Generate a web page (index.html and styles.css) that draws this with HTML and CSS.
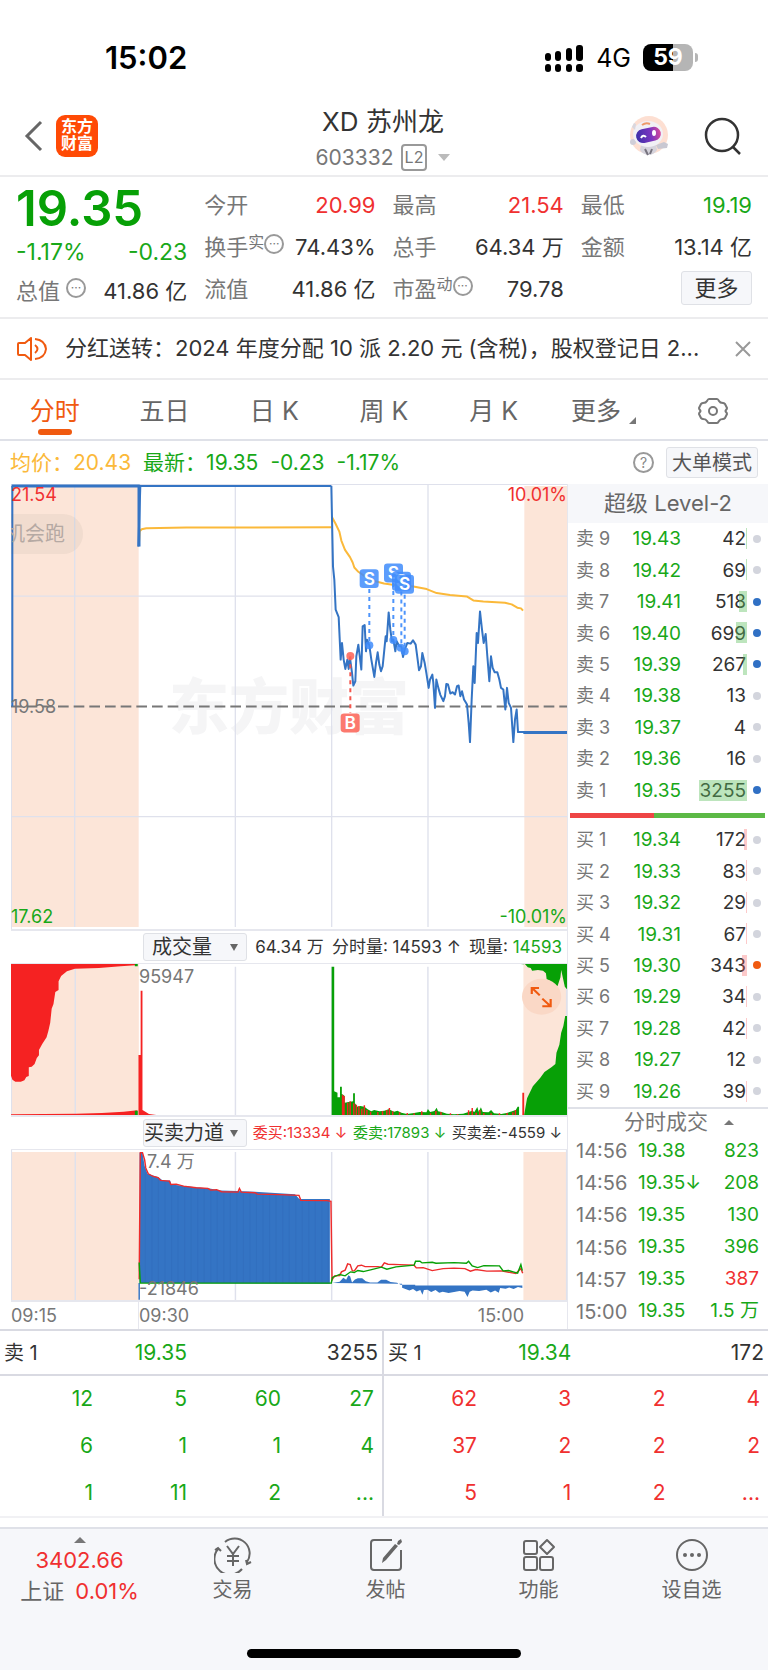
FILE: index.html
```html
<!DOCTYPE html>
<html lang="zh-CN">
<head>
  <meta charset="utf-8">
  <meta name="viewport" content="width=device-width, initial-scale=1">
  <title>XD苏州龙 603332</title>
  <link rel="stylesheet" href="styles.css">
</head>
<body>
<div class="status-bar">
  <span class="clock">15:02</span>
  <div class="status-icons">
    <svg class="signal" viewBox="0 0 40 28" width="40" height="28">
      <g fill="#000">
        <rect x="1" y="9" width="6" height="8" rx="3"/><rect x="11" y="7" width="6" height="10" rx="3"/>
        <rect x="22" y="4" width="6" height="13" rx="3"/><rect x="32" y="1" width="7" height="16" rx="3"/>
        <rect x="1" y="20" width="6" height="8" rx="3"/><rect x="11" y="20" width="6" height="8" rx="3"/>
        <rect x="22" y="20" width="6" height="8" rx="3"/><rect x="32" y="20" width="7" height="8" rx="3"/>
      </g>
    </svg>
    <span class="network">4G</span>
    <div class="battery"><span>59</span></div>
  </div>
</div>

<header class="header">
  <div class="header-side">
    <button class="icon-button" aria-label="返回">
      <svg viewBox="0 0 20 32" width="20" height="32"><path d="M17 2L3 16l14 14" fill="none" stroke="#666" stroke-width="3"/></svg>
    </button>
    <a href="#" class="logo">东方<br>财富</a>
  </div>
  <div class="header-title">
    <h1>XD 苏州龙</h1>
    <div class="stock-code">603332 <span class="level">L2</span><i class="caret-down"></i></div>
  </div>
  <div class="header-side right">
    <button class="icon-button" aria-label="智能助手">
      <svg viewBox="0 0 42 42" width="42" height="42">
        <defs>
          <linearGradient id="visor" x1="0" y1="0" x2="1" y2="0">
            <stop offset="0" stop-color="#3d2fa8"/><stop offset=".6" stop-color="#7a35c0"/><stop offset="1" stop-color="#d84a9b"/>
          </linearGradient>
        </defs>
        <circle cx="21" cy="20" r="19" fill="#fddfd2"/>
        <path d="M13 30q8-4 15 0l1 5q-3 5-9 5-6-1-8-5z" fill="#d5d3dc"/>
        <path d="M28 30l8-3 4 2-1 4-9 1z" fill="#c9c8d2"/>
        <circle cx="5" cy="27" r="3" fill="#d0ced8"/>
        <ellipse cx="20" cy="19" rx="15" ry="13" fill="#f1f0f5"/>
        <path d="M4 12l2-4 2 1-1 6z" fill="#d8d7df"/>
        <rect x="8" y="13" width="25" height="14" rx="7" fill="url(#visor)" transform="rotate(-12 20 20)"/>
        <path d="M13 23q2-4 5-1" fill="none" stroke="#fff" stroke-width="2"/>
        <ellipse cx="26" cy="18" rx="2" ry="3" fill="#fff"/>
        <path d="M14 10q4-3 8-1" fill="none" stroke="#ee9a6a" stroke-width="2"/>
        <path d="M17 34l3 6M24 34l-2 5" stroke="#77747f" stroke-width="2"/>
      </svg>
    </button>
    <button class="icon-button" aria-label="搜索">
      <svg viewBox="0 0 38 38" width="38" height="38"><g fill="none" stroke="#333" stroke-width="2.5"><circle cx="18" cy="18" r="16"/><path d="M29 30l7 7"/></g></svg>
    </button>
  </div>
</header>

<section class="quote">
  <div class="quote-price">
    <strong class="down">19.35</strong>
    <div class="pair change down"><span>-1.17%</span><span>-0.23</span></div>
    <div class="pair"><label>总值<i class="info">···</i></label><span>41.86 亿</span></div>
  </div>
  <div class="quote-col">
    <div class="pair"><label>今开</label><span class="up">20.99</span></div>
    <div class="pair"><label>换手<sup>实</sup><i class="info">···</i></label><span>74.43%</span></div>
    <div class="pair"><label>流值</label><span>41.86 亿</span></div>
  </div>
  <div class="quote-col">
    <div class="pair"><label>最高</label><span class="up">21.54</span></div>
    <div class="pair"><label>总手</label><span>64.34 万</span></div>
    <div class="pair"><label>市盈<sup>动</sup><i class="info">···</i></label><span>79.78</span></div>
  </div>
  <div class="quote-col">
    <div class="pair"><label>最低</label><span class="down">19.19</span></div>
    <div class="pair"><label>金额</label><span>13.14 亿</span></div>
    <button class="box-button more">更多</button>
  </div>
</section>

<section class="notice">
  <svg viewBox="0 0 30 26" width="30" height="26"><g fill="none" stroke="#f05a10" stroke-width="2" stroke-linejoin="round"><path d="M14 2v22l-6-5H2q-1 0-1-1V8q0-1 1-1h6zM18 9q5 4 0 8M18 3q10 1 11 10-1 9-11 10"/></g></svg>
  <a href="#">分红送转：2024 年度分配 10 派 2.20 元 (含税)，股权登记日 2...</a>
  <button class="icon-button" aria-label="关闭">
    <svg viewBox="0 0 16 16" width="16" height="16"><path d="M1 1l14 14M15 1L1 15" stroke="#999" stroke-width="2"/></svg>
  </button>
</section>

<nav class="tabs">
  <button class="active">分时</button>
  <button>五日</button>
  <button>日 K</button>
  <button>周 K</button>
  <button>月 K</button>
  <button class="more-tab">更多<i></i></button>
  <button aria-label="设置">
    <svg viewBox="0 0 30 28" width="30" height="28"><g fill="none" stroke="#777" stroke-width="2" stroke-linejoin="round"><path d="M11 2h8q1 0 2 2 1 2 4 2 1 0 2 1l2 4q0 1-1 2-1 1 0 2 1 1 1 2l-2 4q-1 1-2 1-3 0-4 2-1 2-2 2h-8q-1 0-2-2-1-2-4-2-1 0-2-1l-2-4q0-1 1-2 1-1 0-2-1-1-1-2l2-4q1-1 2-1 3 0 4-2 1-2 2-2z"/><circle cx="15" cy="14" r="4"/></g></svg>
  </button>
</nav>

<div class="summary">
  <span class="avg">均价：20.43</span>
  <span class="down">最新：19.35</span>
  <span class="down">-0.23</span>
  <span class="down">-1.17%</span>
  <button class="help" aria-label="帮助">?</button>
  <button class="box-button mode">大单模式</button>
</div>

<main class="market">
  <div class="charts">
    <div class="chart price-chart">
      <span class="watermark">东方财富</span>
      <svg viewBox="0 0 1668 1338" preserveAspectRatio="none">
        <path d="M0 6H383V1332H0zM1540 6h128v1326h-128z" fill="#fce5d8"/>
        <path class="grid" d="M1 0V1338M191 0V1332M673 0V1332M962 0V1332M1251 0V1332M0 337H1668M0 1000H1668M0 1H1668"/>
        <path d="M0 669H1668" class="base-line"/>
        <path class="avg-line" d="M384 176l2-34 6-6 14-3 120-2 435-1"/>
        <g transform="translate(927 -42)">
          <polyline class="avg-line" points="35,140 46,160 58,185 64,212 75,240 90,262 98,278 103,293 115,306 132,318 160,333 192,341 218,345 280,350 320,358 350,370 390,376 440,380 460,392 490,395 555,399 575,404 592,414 603,416 609,423"/>
          <polyline class="price-line" points="34,48 39,290 43,330 47,420 56,442 62,570 66,520 71,570 76,598 82,570 86,598 90,565 96,610 100,648 106,635 109,560 115,525 124,600 128,470 134,466 138,545 141,510 148,527 154,570 163,622 168,580 173,548 178,585 183,605 188,590 193,540 197,500 200,515 206,428 211,480 216,515 220,510 226,545 230,515 238,530 244,530 249,562 254,540 262,520 272,522 279,512 287,525 291,555 297,602 303,590 307,550 314,580 319,610 326,655 330,630 337,615 340,640 345,715 349,630 355,655 361,676 370,695 375,680 379,643 384,645 391,672 398,668 405,675 411,650 416,648 421,680 426,665 432,690 438,700 441,705 446,760 450,818 455,690 460,590 464,640 470,490 474,520 480,425 486,480 491,520 497,493 502,560 508,635 513,560 518,595 524,608 532,608 538,630 543,655 550,660 556,720 561,655 566,700 573,715 580,818 585,750 590,720 594,788 612,788"/>
          <path class="price-line thick" d="M610 789H742"/>
          <g class="sell">
            <path d="M148 358V520M220 340V505M244 365V530M254 375V540"/>
            <circle cx="148" cy="527" r="12"/><circle cx="220" cy="511" r="12"/><circle cx="242" cy="534" r="12"/><circle cx="254" cy="545" r="12"/>
            <rect x="119" y="298" width="57" height="57" rx="10"/><text x="148" y="345">S</text>
            <rect x="192" y="281" width="57" height="57" rx="10"/><text x="220" y="328">S</text>
            <rect x="216" y="306" width="57" height="57" rx="10"/><text x="244" y="353">S</text>
            <rect x="225" y="315" width="57" height="57" rx="10"/><text x="254" y="362">S</text>
          </g>
          <g class="buy">
            <path d="M91 560V730"/>
            <circle cx="91" cy="559" r="12"/>
            <rect x="62" y="732" width="57" height="57" rx="10"/><text x="91" y="779">B</text>
          </g>
        </g>
        <path class="price-line" d="M4 669V6M382 188L388 6H961"/>
        <path class="price-line thick" d="M2 6H384V188"/>
      </svg>
      <span class="label top-left up">21.54</span>
      <span class="label top-right up">10.01%</span>
      <span class="label middle">19.58</span>
      <span class="label bottom-left down">17.62</span>
      <span class="label bottom-right down">-10.01%</span>
      <span class="bubble">机会跑</span>
    </div>

    <div class="chart-head">
      <span class="picker"><select aria-label="指标一"><option>成交量</option></select></span>
      <span>64.34 万</span><span>分时量: 14593 ↑</span><span>现量: <b class="down">14593</b></span>
    </div>
    <div class="chart volume-chart">
      <svg viewBox="30 102 1531 453" preserveAspectRatio="none">
        <path d="M30 102H382V555H30zM1441 102H1561V555H1441z" fill="#fce5d8"/>
        <path class="grid" d="M31 102V555M207 102V555M648 110V555M913 110V555M1178 110V555M1560 102V555"/>
        <path fill="#f52222" d="M30 102H378l-6 4-40 3-60 5-66 2-22 8-16 14-7 16v26l-9 6-5 36-5 14-4 42-5 24-5 20-12 20-9 18v16l-6 8-6 18-8 8-8 2v26l-7 3-5 10-10 4H42l-8-6-4-12z"/>
        <path fill="#f52222" d="M30 555v-2l180-2 70-2 60-4 38-4v14zM381 555V375h6V182h5v358l8 5 10 7 20 3zM1438 488h5v67h-5z"/>
        <path fill="#07a006" d="M371 102h8v7h-8zM371 542h8v13h-8zM1441 102H1561v76l-6-8-6-30-4-20-2 22-8 26-10-2-8 2-4-16-8-4-2-18-8-8-14-2-16 2-4-8-8-2-8-10-12 2zM1443 555l8-50 16-36 20-25 12-18 20-15 10-9 3-34 8-24 5-36 6-20 5-30h5V555z"/>
        <polygon fill="#07a006" points="913,110 920,110 920,484 929,488 929,502 936,502 936,470 941,470 941,492 949,498 949,518 960,516 972,514 972,490 977,490 977,520 984,530 992,528 1003,530 1012,538 1022,544 1030,540 1045,544 1058,542 1070,538 1085,545 1094,542 1105,548 1120,552 1140,549 1155,546 1174,547 1178,537 1184,546 1196,543 1202,533 1206,544 1216,546 1230,551 1250,553 1275,551 1292,545 1300,542 1306,546 1314,531 1318,545 1324,532 1329,546 1345,547 1352,540 1360,550 1380,552 1395,549 1410,544 1420,540 1425,530 1429,530 1429,555 913,555"/>
        <path class="red-bars" d="M943 555V494M947 555V498M957 555V518M964 555V514M974 555V520M981 555V524M988 555V528M996 555V536M1003 555V526M1010 555V540M1020 555V545M1040 555V546M1053 555V543M1065 555V540M1072 555V534M1081 555V544M1100 555V547M1121 555V549M1140 555V550M1161 555V544M1185 555V550M1200 555V543M1214 555V546M1240 555V550M1260 555V552M1290 555V541M1300 555V534M1311 555V548M1321 555V540M1332 555V550M1352 555V550M1375 555V550M1396 555V549M1412 555V547M1419 555V540"/>
        <circle cx="1491" cy="200" r="54" fill="#fad8c6"/>
        <g fill="none" stroke="#f05a10" stroke-width="6"><path d="M1486 196l-21-22M1464 192v-18h20M1493 206l22 22M1516 207v22h-23"/></g>
      </svg>
      <span class="label pre-open">95947</span>
    </div>

    <div class="chart-head small">
      <span class="picker"><select aria-label="指标二"><option>买卖力道</option></select></span>
      <span class="up">委买:13334 ↓</span><span class="down">委卖:17893 ↓</span><span>买卖差:-4559 ↓</span>
    </div>
    <div class="chart power-chart">
      <svg viewBox="30 120 1531 453" preserveAspectRatio="none">
        <path d="M30 126H382V573H30zM1441 126H1561V573H1441z" fill="#fce5d8"/>
        <path class="grid" d="M31 120V573M207 126V573M648 126V573M913 126V573M1178 126V573M1560 120V573"/>
        <path fill="#3474c4" d="M384 522V128h8l6 40 8 24 30 10 12 10h20l4 12 60 8 45 4 30 6 45 2 50 2 110 8 12 14h84v256z"/>
        <path stroke="#3069b8" stroke-width="2" opacity=".5" d="M400 190V520M418 202V520M436 208V520M454 215V520M472 225V520M490 228V520M508 232V520M526 234V520M544 236V520M562 238V520M580 241V520M598 243V520M616 247V520M634 248V520M652 248V520M670 249V520M688 250V520M706 254V520M724 255V520M742 256V520M760 257V520M778 258V520M796 258V520M814 259V520M832 274V520M850 274V520M868 275V520M886 275V520M904 276V520"/>
        <path fill="#3474c4" d="M381 522h4v50h-4zM915 522l20-4 10-12 8 6 6-14 5 4 5 18 8-9 8-4 12 0 10 9 12 4 20 0 10-8 14 0 12 7 18 2 10 6 40 0v2h295v8l-12-3-12 6-12-5-10 4-15-2-4 14-10-7-12 6-12-8-20 4-18-2-8 4-6 16-8-16-14-2-30 6-16-4-10 3-10-8-12 6-10-7-10 1-4 14-6-14-10 4-10-7-10 4-20-8v-12z"/>
        <polyline fill="none" stroke="#ee2c2c" stroke-width="4" points="383,510 386,128 392,128 398,150 401,174 408,192 422,200 435,203 442,212 466,214 470,224 485,223 505,229 540,234 572,236 580,241 596,240 610,246 655,247 659,236 664,247 702,249 708,253 770,255 823,257 828,272 900,273 911,275 914,512 921,500 935,499 940,488 950,483 957,464 964,466 970,485 976,484 985,470 995,468 1005,472 1040,472 1050,474 1058,461 1068,465 1100,466 1140,468 1146,476 1165,475 1190,484 1220,478 1250,477 1280,478 1295,486 1310,481 1340,486 1380,485 1420,493 1434,478 1439,492"/>
        <polyline fill="none" stroke="#07a006" stroke-width="4" points="383,460 386,522 912,522 915,505 935,496 950,500 965,488 975,490 985,484 1000,487 1020,482 1050,474 1065,480 1090,473 1140,468 1144,456 1156,456 1162,461 1190,459 1200,462 1250,460 1284,462 1290,456 1300,470 1315,475 1332,469 1375,470 1385,485 1400,484 1425,492 1434,466 1438,484"/>
      </svg>
      <span class="label power-top">7.4 万</span>
      <span class="label power-bottom">-21846</span>
    </div>
    <div class="time-axis"><span class="open">09:15</span><span>09:30</span><span class="close">15:00</span></div>
  </div>

  <aside class="book">
    <h2>超级 Level-2</h2>
    <table class="orders sell-orders">
      <tr><th>卖 9</th><td class="down">19.43</td><td><i style="width:1px"></i>42</td><td><b></b></td></tr>
      <tr><th>卖 8</th><td class="down">19.42</td><td><i style="width:1px"></i>69</td><td><b></b></td></tr>
      <tr><th>卖 7</th><td class="down">19.41</td><td><i style="width:8px"></i>518</td><td><b class="blue"></b></td></tr>
      <tr><th>卖 6</th><td class="down">19.40</td><td><i style="width:11px"></i>699</td><td><b class="blue"></b></td></tr>
      <tr><th>卖 5</th><td class="down">19.39</td><td><i style="width:4px"></i>267</td><td><b class="blue"></b></td></tr>
      <tr><th>卖 4</th><td class="down">19.38</td><td>13</td><td><b></b></td></tr>
      <tr><th>卖 3</th><td class="down">19.37</td><td>4</td><td><b></b></td></tr>
      <tr><th>卖 2</th><td class="down">19.36</td><td>16</td><td><b></b></td></tr>
      <tr><th>卖 1</th><td class="down">19.35</td><td><i style="width:48px"></i>3255</td><td><b class="blue"></b></td></tr>
    </table>
    <div class="ratio"><i style="width:43%"></i></div>
    <table class="orders buy-orders">
      <tr><th>买 1</th><td class="down">19.34</td><td><i style="width:3px"></i>172</td><td><b></b></td></tr>
      <tr><th>买 2</th><td class="down">19.33</td><td><i style="width:1px"></i>83</td><td><b></b></td></tr>
      <tr><th>买 3</th><td class="down">19.32</td><td><i style="width:1px"></i>29</td><td><b></b></td></tr>
      <tr><th>买 4</th><td class="down">19.31</td><td><i style="width:1px"></i>67</td><td><b></b></td></tr>
      <tr><th>买 5</th><td class="down">19.30</td><td><i style="width:5px"></i>343</td><td><b class="orange"></b></td></tr>
      <tr><th>买 6</th><td class="down">19.29</td><td><i style="width:1px"></i>34</td><td><b></b></td></tr>
      <tr><th>买 7</th><td class="down">19.28</td><td><i style="width:1px"></i>42</td><td><b></b></td></tr>
      <tr><th>买 8</th><td class="down">19.27</td><td>12</td><td><b></b></td></tr>
      <tr><th>买 9</th><td class="down">19.26</td><td><i style="width:1px"></i>39</td><td><b></b></td></tr>
    </table>
    <button class="trades-head">分时成交<i class="caret-up"></i></button>
    <table class="trades">
      <tr><th>14:56</th><td>19.38</td><td>823</td></tr>
      <tr><th>14:56</th><td>19.35↓</td><td>208</td></tr>
      <tr><th>14:56</th><td>19.35</td><td>130</td></tr>
      <tr><th>14:56</th><td>19.35</td><td>396</td></tr>
      <tr><th>14:57</th><td>19.35</td><td class="up">387</td></tr>
      <tr><th>15:00</th><td>19.35</td><td>1.5 万</td></tr>
    </table>
  </aside>
</main>

<section class="queues">
  <table class="queue down">
    <thead><tr><th>卖 1</th><td>19.35</td><td class="total" colspan="2">3255</td></tr></thead>
    <tbody>
      <tr><td>12</td><td>5</td><td>60</td><td>27</td></tr>
      <tr><td>6</td><td>1</td><td>1</td><td>4</td></tr>
      <tr><td>1</td><td>11</td><td>2</td><td>...</td></tr>
    </tbody>
  </table>
  <table class="queue up">
    <thead><tr><th>买 1</th><td class="down">19.34</td><td class="total" colspan="2">172</td></tr></thead>
    <tbody>
      <tr><td>62</td><td>3</td><td>2</td><td>4</td></tr>
      <tr><td>37</td><td>2</td><td>2</td><td>2</td></tr>
      <tr><td>5</td><td>1</td><td>2</td><td>...</td></tr>
    </tbody>
  </table>
</section>

<footer class="bottom-bar">
  <nav class="bottom-nav">
    <a href="#" class="index">
      <i class="caret-up"></i>
      <span class="up">3402.66</span>
      <span>上证 <b class="up">0.01%</b></span>
    </a>
    <a href="#">
      <svg viewBox="0 0 38 36" width="38" height="36"><g fill="none" stroke="#666" stroke-width="2"><path d="M11 5a15 15 0 0 1 22 20M28 32A15 15 0 0 1 4 12M1 13l3-2 3 3M37 25l-4 2-1-4M13 9l6 8 6-8M19 17v12M13 19h12M13 24h12"/></g></svg>
      交易
    </a>
    <a href="#">
      <svg viewBox="0 0 38 36" width="38" height="36"><path d="M25 3H7Q4 3 4 6v24q0 3 3 3h24q3 0 3-3V13" fill="none" stroke="#666" stroke-width="2"/><path d="M28 7l3 2-12 14-4 3 1-5zM31 4l3-2 1 3-3 3-2-1z" fill="#666"/></svg>
      发帖
    </a>
    <a href="#">
      <svg viewBox="0 0 38 36" width="38" height="36"><g fill="none" stroke="#666" stroke-width="2"><rect x="4" y="4" width="13" height="13" rx="2"/><rect x="4" y="20" width="13" height="13" rx="2"/><rect x="20" y="20" width="13" height="13" rx="2"/><path d="M27 3l7 7-7 7-7-7z" stroke-linejoin="round"/></g></svg>
      功能
    </a>
    <a href="#">
      <svg viewBox="0 0 38 36" width="38" height="36"><circle cx="19" cy="18" r="15" fill="none" stroke="#666" stroke-width="2"/><g fill="#666"><circle cx="12" cy="18" r="2"/><circle cx="19" cy="18" r="2"/><circle cx="26" cy="18" r="2"/></g></svg>
      设自选
    </a>
  </nav>
  <div class="home-indicator"></div>
</footer>
</body>
</html>
```

FILE: styles.css
```css
* {
  box-sizing: border-box;
}

body {
  display: flex;
  flex-direction: column;
  min-height: 100vh;
  margin: 0;
  background: #fff;
  color: #333;
  font-family: Inter, "Noto Sans CJK SC", sans-serif;
  font-size: 20px;
  line-height: 1.2;
}

button, select {
  font: inherit;
  color: inherit;
  border: 0;
  padding: 0;
  background: none;
}

a {
  color: inherit;
  text-decoration: none;
}

svg {
  display: block;
}

i {
  font-style: normal;
}

table {
  border-collapse: collapse;
}

th, td, b {
  font-weight: 400;
  padding: 0;
}

.up {
  color: #f03030;
}

.down {
  color: #18a818;
}

.caret-up, .caret-down {
  display: inline-block;
  border: 6px solid transparent;
}

.caret-up {
  border-top: 0;
  border-bottom-color: #777;
}

.caret-down {
  border-bottom: 0;
  border-top: 7px solid #bbb;
}

.box-button {
  border: 1px solid #dfe1e6;
  border-radius: 3px;
  background: #f6f7fa;
}

/* status bar */
.status-bar {
  display: flex;
  justify-content: space-between;
  align-items: center;
  height: 97px;
  padding: 18px 75px 0 105px;
  color: #000;
}

.clock {
  font-size: 31px;
  font-weight: 600;
}

.status-icons {
  display: flex;
  align-items: center;
  gap: 12px;
}

.network {
  font-size: 25px;
}

.battery {
  position: relative;
  width: 50px;
  height: 27px;
  border-radius: 8px;
  background: linear-gradient(90deg, #000 59%, #b5b5b5 59%);
  color: #fff;
  font-size: 23px;
  font-weight: 700;
  line-height: 27px;
  text-align: center;
}

.battery::after {
  content: "";
  position: absolute;
  right: -5px;
  top: 9px;
  width: 3px;
  height: 9px;
  border-radius: 0 3px 3px 0;
  background: #b5b5b5;
}

/* header */
.header {
  display: flex;
  align-items: center;
  justify-content: space-between;
  height: 80px;
  padding: 0 26px 0 24px;
  border-bottom: 2px solid #ececee;
}

.header-side {
  display: flex;
  align-items: center;
  gap: 12px;
  width: 120px;
}

.header-side.right {
  justify-content: flex-end;
  gap: 34px;
}

.logo {
  width: 42px;
  height: 42px;
  border-radius: 9px;
  background: #ff4a05;
  color: #fff;
  font-size: 16px;
  font-weight: 700;
  line-height: 17px;
  padding-top: 3px;
  text-align: center;
}

.header-title {
  padding-top: 3px;
  text-align: center;
}

.header-title h1 {
  margin: 0;
  font-size: 26px;
  line-height: 40px;
  font-weight: 400;
}

.stock-code {
  display: flex;
  align-items: center;
  gap: 7px;
  height: 31px;
  color: #777;
  font-size: 21px;
}

.level {
  border: 2px solid #999;
  border-radius: 4px;
  font-size: 16px;
  line-height: 23px;
  padding: 0 2px;
}

.stock-code .caret-down {
  margin-left: 4px;
}

/* quote */
.quote {
  display: grid;
  grid-template-columns: repeat(4, 1fr);
  gap: 17px;
  padding: 7px 16px 7px;
  border-bottom: 2px solid #ececee;
  font-size: 22px;
}

.quote-price strong {
  display: block;
  font-size: 49px;
  line-height: 50px;
  font-weight: 600;
  color: #07a006;
}

.pair {
  display: flex;
  justify-content: space-between;
  align-items: center;
  height: 42px;
  white-space: nowrap;
}

.quote-price .pair {
  height: 38px;
}

.change {
  font-size: 23px;
}

.pair label {
  display: flex;
  color: #777;
}

.pair sup {
  font-size: 16px;
  line-height: 16px;
  vertical-align: top;
}

.info {
  width: 20px;
  height: 20px;
  border: 2px solid #999;
  border-radius: 50%;
  font-size: 12px;
  line-height: 15px;
  text-align: center;
}

.quote-price .info {
  margin-left: 6px;
}

.more {
  display: block;
  width: 71px;
  height: 34px;
  margin: 3px 0 0 auto;
}

/* notice */
.notice {
  display: flex;
  align-items: center;
  gap: 18px;
  height: 61px;
  padding: 0 17px;
  border-bottom: 2px solid #ececee;
  font-size: 22px;
}

.notice a {
  flex: 1;
  overflow: hidden;
  white-space: nowrap;
}

.notice svg {
  flex: none;
}

/* tabs */
.tabs {
  display: grid;
  grid-template-columns: repeat(7, 1fr);
  height: 61px;
  border-bottom: 2px solid #dfe1e8;
  font-size: 25px;
  color: #666;
}

.tabs button {
  position: relative;
  display: flex;
  align-items: center;
  justify-content: center;
  padding-top: 2px;
}

.tabs .active {
  color: #f05a10;
}

.tabs .active::after {
  content: "";
  position: absolute;
  bottom: 4px;
  width: 34px;
  height: 6px;
  border-radius: 3px;
  background: #f05a10;
}

.more-tab i {
  align-self: flex-end;
  margin: 0 0 15px 8px;
  border-left: 7px solid transparent;
  border-bottom: 7px solid #777;
}

/* average / latest price line */
.summary {
  display: flex;
  align-items: center;
  gap: 12px;
  height: 43px;
  padding: 0 10px;
  font-size: 21px;
  white-space: nowrap;
}

.avg {
  color: #fbb93a;
}

.help {
  width: 21px;
  height: 21px;
  margin-left: auto;
  border: 2px solid #999;
  border-radius: 50%;
  color: #888;
  font-size: 14px;
  line-height: 16px;
}

.mode {
  padding: 0 5px;
  height: 31px;
  color: #555;
  font-size: 20px;
}

/* charts */
.market {
  display: grid;
  grid-template-columns: 1fr 200px;
  border-bottom: 2px solid #d9dae2;
}

.charts {
  padding-left: 11px;
  border-right: 1px solid #e6e7ee;
}

.chart {
  position: relative;
  border-bottom: 2px solid #e6e7ee;
  color: #777;
  overflow: hidden;
}

.chart svg {
  position: relative;
  width: 100%;
  height: 100%;
}

.price-chart {
  height: 447px;
}

.volume-chart {
  height: 154px;
  border-top: 1px solid #e6e7ee;
}

.power-chart {
  height: 153px;
  border-top: 1px solid #e6e7ee;
}

.grid {
  fill: none;
  stroke: #dfe1ec;
  stroke-width: 4px;
}

.base-line {
  stroke: #777;
  stroke-width: 6;
  stroke-dasharray: 32 15;
}

.avg-line, .price-line {
  fill: none;
  stroke: #fbb93a;
  stroke-width: 6;
  stroke-linejoin: round;
}

.price-line {
  stroke: #3474c4;
}

.thick {
  stroke-width: 9;
}

.sell, .buy {
  fill: #3f8cfb;
  fill-opacity: .85;
  stroke: none;
  font-size: 52px;
  font-weight: 600;
  text-anchor: middle;
}

.buy {
  fill: #fb6155;
}

.sell path, .buy path {
  stroke: #4d94fb;
  stroke-width: 6;
  stroke-dasharray: 12 12;
}

.buy path {
  stroke: #f4564c;
}

.sell text, .buy text {
  fill: #fff;
  fill-opacity: 1;
}

.red-bars {
  stroke: #f52222;
  stroke-width: 4;
}

.watermark {
  position: absolute;
  left: 158px;
  top: 187px;
  color: #f5f5f6;
  font-size: 60px;
  font-weight: 900;
  line-height: 72px;
}

.label {
  position: absolute;
  font-size: 18px;
  line-height: 20px;
}

.top-left {
  top: 1px;
  left: 0;
}

.top-right {
  top: 1px;
  right: 0;
}

.middle {
  top: 213px;
  left: 0;
}

.bottom-left {
  bottom: 2px;
  left: 0;
}

.bottom-right {
  bottom: 2px;
  right: 0;
}

.bubble {
  position: absolute;
  top: 30px;
  left: -12px;
  padding: 0 18px 0 6px;
  border-radius: 0 20px 20px 0;
  background: rgba(120, 110, 105, .08);
  color: #b5a9a3;
  font-size: 20px;
  line-height: 40px;
}

.label.pre-open {
  top: 3px;
  left: 128px;
}

.label.power-top {
  top: 2px;
  left: 136px;
}

.label.power-bottom {
  bottom: 1px;
  left: 128px;
}

.chart-head {
  display: flex;
  align-items: center;
  justify-content: space-between;
  height: 32px;
  padding: 0 5px 0 132px;
  font-size: 17px;
  white-space: nowrap;
}

.chart-head.small {
  font-size: 15px;
}

.picker {
  position: relative;
  height: 28px;
  width: 104px;
}

.picker select {
  appearance: none;
  width: 104px;
  height: 28px;
  padding-left: 8px;
  border: 1px solid #dfe1e6;
  border-radius: 3px;
  background: #f6f7fa;
  font-size: 20px;
}

.small .picker select {
  padding-left: 0;
}

.picker::after {
  content: "";
  position: absolute;
  right: 9px;
  top: 11px;
  border: 4px solid transparent;
  border-top: 7px solid #666;
  border-bottom: 0;
}

.time-axis {
  display: flex;
  height: 27px;
  color: #777;
  font-size: 18px;
  line-height: 27px;
}

.time-axis .open {
  width: 128px;
  border-right: 1px solid #e6e7ee;
}

.time-axis .close {
  margin-left: auto;
  margin-right: 43px;
}

/* order book */
.book h2 {
  margin: 0;
  height: 39px;
  background: #f6f7fa;
  color: #666;
  font-size: 22px;
  font-weight: 400;
  line-height: 39px;
  text-align: center;
}

.orders {
  width: 100%;
  height: 283px;
  font-size: 19px;
  line-height: 21px;
  table-layout: fixed;
}

.orders th, .trades th {
  width: 55px;
  padding-left: 8px;
  color: #777;
  text-align: left;
}

.orders th {
  font-size: 18px;
}

.orders td {
  position: relative;
  text-align: right;
}

.orders td:nth-child(2) {
  width: 58px;
}

.orders td:nth-child(3) {
  padding-right: 1px;
}

.orders td:last-child {
  width: 21px;
}

.orders td i {
  position: absolute;
  right: 0;
  top: 5px;
  height: 21px;
  background: rgba(90, 190, 90, .4);
}

.buy-orders td i {
  background: rgba(250, 80, 80, .3);
}

.orders td b {
  display: block;
  width: 8px;
  height: 8px;
  margin-left: 6px;
  border-radius: 50%;
  background: #d3d5dd;
}

.orders .blue {
  background: #3070c4;
}

.orders .orange {
  background: #f05a10;
}

.ratio {
  height: 5px;
  margin: 7px 3px 6px 2px;
  background: #5cb946;
}

.ratio i {
  display: block;
  height: 100%;
  background: #ee4545;
}

.trades-head {
  display: block;
  width: 100%;
  height: 28px;
  padding-left: 22px;
  border-top: 2px solid #dfe1e8;
  color: #777;
  font-size: 21px;
  line-height: 26px;
}

.trades-head i {
  border-width: 5px;
  border-top: 0;
  margin: 0 0 4px 16px;
}

.trades {
  width: 100%;
  height: 193px;
  font-size: 19px;
  color: #18a818;
}

.trades th {
  width: 70px;
  font-size: 20px;
}

.trades td:last-child {
  padding-right: 9px;
  text-align: right;
}

/* queues */
.queues {
  display: grid;
  grid-template-columns: 1fr 1fr;
  border-bottom: 2px solid #f1f1f4;
  font-size: 21px;
}

.queue {
  width: 100%;
  table-layout: fixed;
}

.queue:first-child {
  border-right: 2px solid #d9dae2;
}

.queue td {
  height: 47px;
  padding-right: 8px;
  text-align: right;
}

.queue thead {
  border-bottom: 2px solid #d9dae2;
}

.queue thead td {
  height: 44px;
}

.queue th {
  width: 101px;
  padding-left: 4px;
  color: #333;
  font-size: 20px;
  text-align: left;
}

.queue .total {
  padding-right: 4px;
  color: #333;
}

/* bottom bar */
.bottom-bar {
  flex: 1;
  margin-top: 9px;
  border-top: 2px solid #dfe1e8;
  background: #f6f7fa;
}

.bottom-nav {
  display: grid;
  grid-template-columns: repeat(5, 1fr);
  height: 120px;
  padding: 8px 0 0 3px;
  color: #666;
}

.bottom-nav a {
  display: flex;
  flex-direction: column;
  align-items: center;
  gap: 5px;
}

.bottom-nav .index {
  gap: 4px;
  font-size: 22px;
  line-height: 27px;
}

.index b {
  margin-left: 5px;
}

.home-indicator {
  width: 274px;
  height: 9px;
  margin: 0 auto 14px;
  border-radius: 5px;
  background: #000;
}
```
